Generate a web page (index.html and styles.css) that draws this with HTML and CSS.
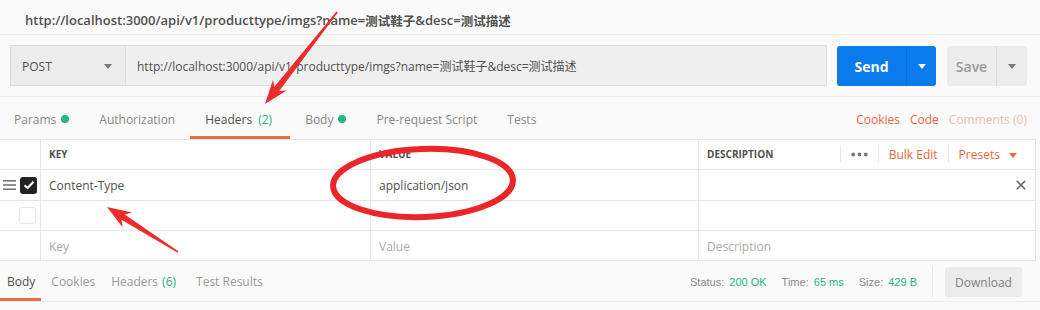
FILE: index.html
```html
<!DOCTYPE html>
<html>
<head>
<meta charset="utf-8">
<link rel="stylesheet" href="styles.css">
</head>
<body>
<div class="page">
  <div class="title">http://localhost:3000/api/v1/producttype/imgs?name=<span class="cjk">测试鞋子</span>&amp;desc=<span class="cjk">测试描述</span></div>

  <div class="url-row">
    <div class="method"><span>POST</span><span class="caret dark"></span></div>
    <div class="url">http://localhost:3000/api/v1/producttype/imgs?name=测试鞋子&amp;desc=测试描述</div>
    <div class="send"><span class="send-label">Send</span><span class="send-drop"><span class="caret white"></span></span></div>
    <div class="save"><span class="save-label">Save</span><span class="save-drop"><span class="caret dark"></span></span></div>
  </div>

  <div class="req-tabs">
    <div class="tabs">
      <div class="tab">Params<span class="dot"></span></div>
      <div class="tab">Authorization</div>
      <div class="tab active">Headers <span class="count">(2)</span></div>
      <div class="tab">Body<span class="dot"></span></div>
      <div class="tab">Pre-request Script</div>
      <div class="tab">Tests</div>
    </div>
    <div class="links">
      <span class="link">Cookies</span>
      <span class="link">Code</span>
      <span class="link faint">Comments (0)</span>
    </div>
  </div>

  <div class="table">
    <div class="row head">
      <div class="cell c0"></div>
      <div class="cell">KEY</div>
      <div class="cell">VALUE</div>
      <div class="cell desc-head">
        <span>DESCRIPTION</span>
        <div class="head-actions">
          <span class="sep"></span>
          <span class="dots"><svg width="17" height="5" viewBox="0 0 17 5"><circle cx="2.2" cy="2.5" r="1.9" fill="#777"/><circle cx="8.5" cy="2.5" r="1.9" fill="#777"/><circle cx="14.8" cy="2.5" r="1.9" fill="#777"/></svg></span>
          <span class="sep"></span>
          <span class="act">Bulk Edit</span>
          <span class="sep"></span>
          <span class="act">Presets <span class="caret orange"></span></span>
        </div>
      </div>
    </div>
    <div class="row">
      <div class="cell c0">
        <svg class="grip" width="13" height="10" viewBox="0 0 13 10"><rect x="0" y="0" width="13" height="1.6" fill="#777"/><rect x="0" y="4.2" width="13" height="1.6" fill="#777"/><rect x="0" y="8.4" width="13" height="1.6" fill="#777"/></svg>
        <span class="check on"><svg width="12" height="10" viewBox="0 0 12 10"><path d="M1.5 5.2 L4.6 8 L10.5 1.8" fill="none" stroke="#fff" stroke-width="2.2"/></svg></span>
      </div>
      <div class="cell text">Content-Type</div>
      <div class="cell text">application/json</div>
      <div class="cell text close-cell"><svg class="close" width="10" height="10" viewBox="0 0 10 10"><path d="M0.8 0.8 L9.2 9.2 M9.2 0.8 L0.8 9.2" stroke="#666" stroke-width="1.6"/></svg></div>
    </div>
    <div class="row">
      <div class="cell c0"><span class="check off"></span></div>
      <div class="cell"></div>
      <div class="cell"></div>
      <div class="cell"></div>
    </div>
    <div class="row">
      <div class="cell c0"></div>
      <div class="cell ph">Key</div>
      <div class="cell ph">Value</div>
      <div class="cell ph">Description</div>
    </div>
  </div>

  <div class="resp-bar">
    <div class="rtabs">
      <div class="rtab active">Body</div>
      <div class="rtab">Cookies</div>
      <div class="rtab">Headers <span class="count">(6)</span></div>
      <div class="rtab last">Test Results</div>
    </div>
    <div class="stats">
      <span class="stat">Status: <b>200 OK</b></span>
      <span class="stat">Time: <b>65 ms</b></span>
      <span class="stat">Size: <b>429 B</b></span>
      <span class="vsep"></span>
      <span class="download">Download</span>
    </div>
  </div>

  <svg class="annot" width="1040" height="310" viewBox="0 0 1040 310">
    <polygon fill="#ee2b2b" points="337.8,12.4 279.2,90.9 286.6,90.4 265,104 273.0,79.8 274.2,87.1 336.4,11.4"/>
    <polygon fill="#ee2b2b" points="178.3,251.3 124.7,214.6 132.0,212.5 107,207 122.6,227.3 121.5,219.8 177.7,252.7"/>
    <ellipse cx="423" cy="183" rx="90" ry="34" fill="none" stroke="#ec2529" stroke-width="6" transform="rotate(-2 423 183)"/>
  </svg>
</div>
</body>
</html>
```

FILE: styles.css
```css
* { box-sizing: border-box; }
html, body { margin: 0; padding: 0; }
body {
  background: #fafafa;
  font-family: "Open Sans", "Noto Sans CJK SC", sans-serif;
  color: #505050;
  width: 1040px;
  height: 310px;
  overflow: hidden;
}
.page { position: relative; width: 1040px; height: 310px; }

.title {
  height: 35px;
  padding: 6px 0 0 25px;
  display: flex;
  align-items: center;
  font-size: 13px;
  font-weight: 600;
  color: #505050;
  border-bottom: 1px solid #ededed;
}
.title .cjk { font-size: 12.5px; }

.url-row {
  display: flex;
  padding: 10px 13px 10px 10px;
  height: 62px;
  border-bottom: 1px solid #ececec;
}
.method {
  width: 115px;
  height: 41px;
  background: #ececec;
  border: 1px solid #dedede;
  border-right: none;
  display: flex;
  align-items: center;
  justify-content: space-between;
  padding: 1px 13px 0 11px;
  font-size: 12px;
  color: #505050;
}
.url {
  flex: 1;
  height: 41px;
  background: #efefef;
  border: 1px solid #dedede;
  display: flex;
  align-items: center;
  padding: 1px 0 0 11px;
  font-size: 12px;
  color: #505050;
}
.send {
  margin-left: 10px;
  width: 99px;
  height: 40px;
  margin-top: 1px;
  background: #097bed;
  border-radius: 3px;
  display: flex;
  color: #fff;
}
.send-label {
  width: 70px;
  display: flex;
  align-items: center;
  justify-content: center;
  font-size: 14px;
  font-weight: 700;
  border-right: 1px solid #0a6fd3;
}
.send-drop { flex: 1; display: flex; align-items: center; justify-content: center; }
.save {
  margin-left: 11px;
  width: 80px;
  height: 40px;
  margin-top: 1px;
  background: #ececec;
  border-radius: 3px;
  display: flex;
  color: #9a9a9a;
}
.save-label {
  width: 50px;
  display: flex;
  align-items: center;
  justify-content: center;
  font-size: 14px;
  font-weight: 600;
  border-right: 1px solid #dcdcdc;
}
.save-drop { flex: 1; display: flex; align-items: center; justify-content: center; }

.caret {
  display: inline-block;
  width: 0; height: 0;
  border-left: 4px solid transparent;
  border-right: 4px solid transparent;
  border-top: 5px solid #777;
}
.caret.white { border-top-color: #fff; }
.caret.dark { border-top-color: #7a7a7a; }
.caret.orange { border-top-color: #e8663c; margin-left: 6px; vertical-align: 1px; }

.req-tabs {
  display: flex;
  justify-content: space-between;
  height: 42px;
  padding-right: 13px;
}
.tabs { display: flex; }
.tab {
  display: flex;
  align-items: center;
  padding: 5px 15px 0;
  font-size: 12px;
  color: #888;
  border-bottom: 3px solid transparent;
}
.tab:first-child { padding-left: 14px; }
.tab.active { color: #505050; border-bottom-color: #e8703f; padding-right: 18px; }
.tab .count { color: #26b47f; margin-left: 6px; }
.dot {
  width: 8px; height: 8px;
  border-radius: 50%;
  background: #26b47f;
  margin-left: 5px;
}
.links { display: flex; align-items: center; gap: 10px; font-size: 12px; padding-top: 3px; }
.link { color: #e8663c; }
.link.faint { color: #f5c0ab; }

.table {
  width: 1036px;
  background: #fff;
  border-top: 1px solid #e6e6e6;
  border-right: 1px solid #e6e6e6;
}
.row {
  display: grid;
  grid-template-columns: 40px 330px 328px 1fr;
  height: 30px;
  border-bottom: 1px solid #e6e6e6;
}
.row:nth-child(2) { height: 31px; }
.cell {
  border-left: 1px solid #e6e6e6;
  display: flex;
  align-items: center;
  padding-left: 8px;
  font-size: 12px;
  color: #505050;
}
.cell.c0 { border-left: none; padding-left: 3px; gap: 4px; }
.head .cell { font-size: 10px; font-weight: 700; color: #505050; padding-bottom: 1px; }
.desc-head { justify-content: space-between; padding-right: 18px; }
.head-actions { display: flex; align-items: center; height: 100%; }
.sep { width: 1px; height: 18px; background: #e6e6e6; }
.dots { display: flex; align-items: center; padding: 0 10px; }
.dots svg { display: block; }
.act { color: #e8663c; font-size: 12px; font-weight: 400; padding: 0 10px; }
.act:last-child { padding-right: 0; }

.grip { display: block; }
.check {
  width: 17px; height: 17px;
  border-radius: 3px;
  display: flex;
  align-items: center;
  justify-content: center;
}
.check.on { background: #222; }
.check.off { border: 1px solid #e6e6e6; background: #fff; margin-left: 16px; }
.close-cell { justify-content: flex-end; padding-right: 9px; }
.close { display: block; }
.ph { color: #aaa; padding-top: 1px; }

.resp-bar {
  display: flex;
  justify-content: space-between;
  height: 41px;
  border-bottom: 1px solid #ececec;
  padding-right: 18px;
}
.rtabs { display: flex; gap: 3px; }
.rtab {
  display: flex;
  align-items: center;
  padding: 4px 6px 0 7px;
  font-size: 12px;
  color: #999;
  border-bottom: 3px solid transparent;
}
.rtab.last { margin-left: 4px; }
.rtab.active { color: #505050; border-bottom-color: #e8703f; }
.rtab .count { color: #26b47f; margin-left: 4px; }
.stats {
  display: flex;
  align-items: center;
  font-family: "Liberation Sans", Arial, sans-serif;
  font-size: 11px;
  color: #888;
  padding-top: 2px;
}
.stat { margin-right: 15px; }
.stat b { font-weight: 400; color: #26b47f; margin-left: 2px; }
.vsep { width: 1px; height: 30px; background: #e6e6e6; margin-right: 12px; }
.download {
  font-family: "Open Sans", sans-serif;
  font-size: 12px;
  color: #808080;
  background: #ececec;
  border-radius: 2px;
  width: 77px;
  height: 30px;
  display: flex;
  align-items: center;
  justify-content: center;
}

.annot { position: absolute; left: 0; top: 0; pointer-events: none; }
```
